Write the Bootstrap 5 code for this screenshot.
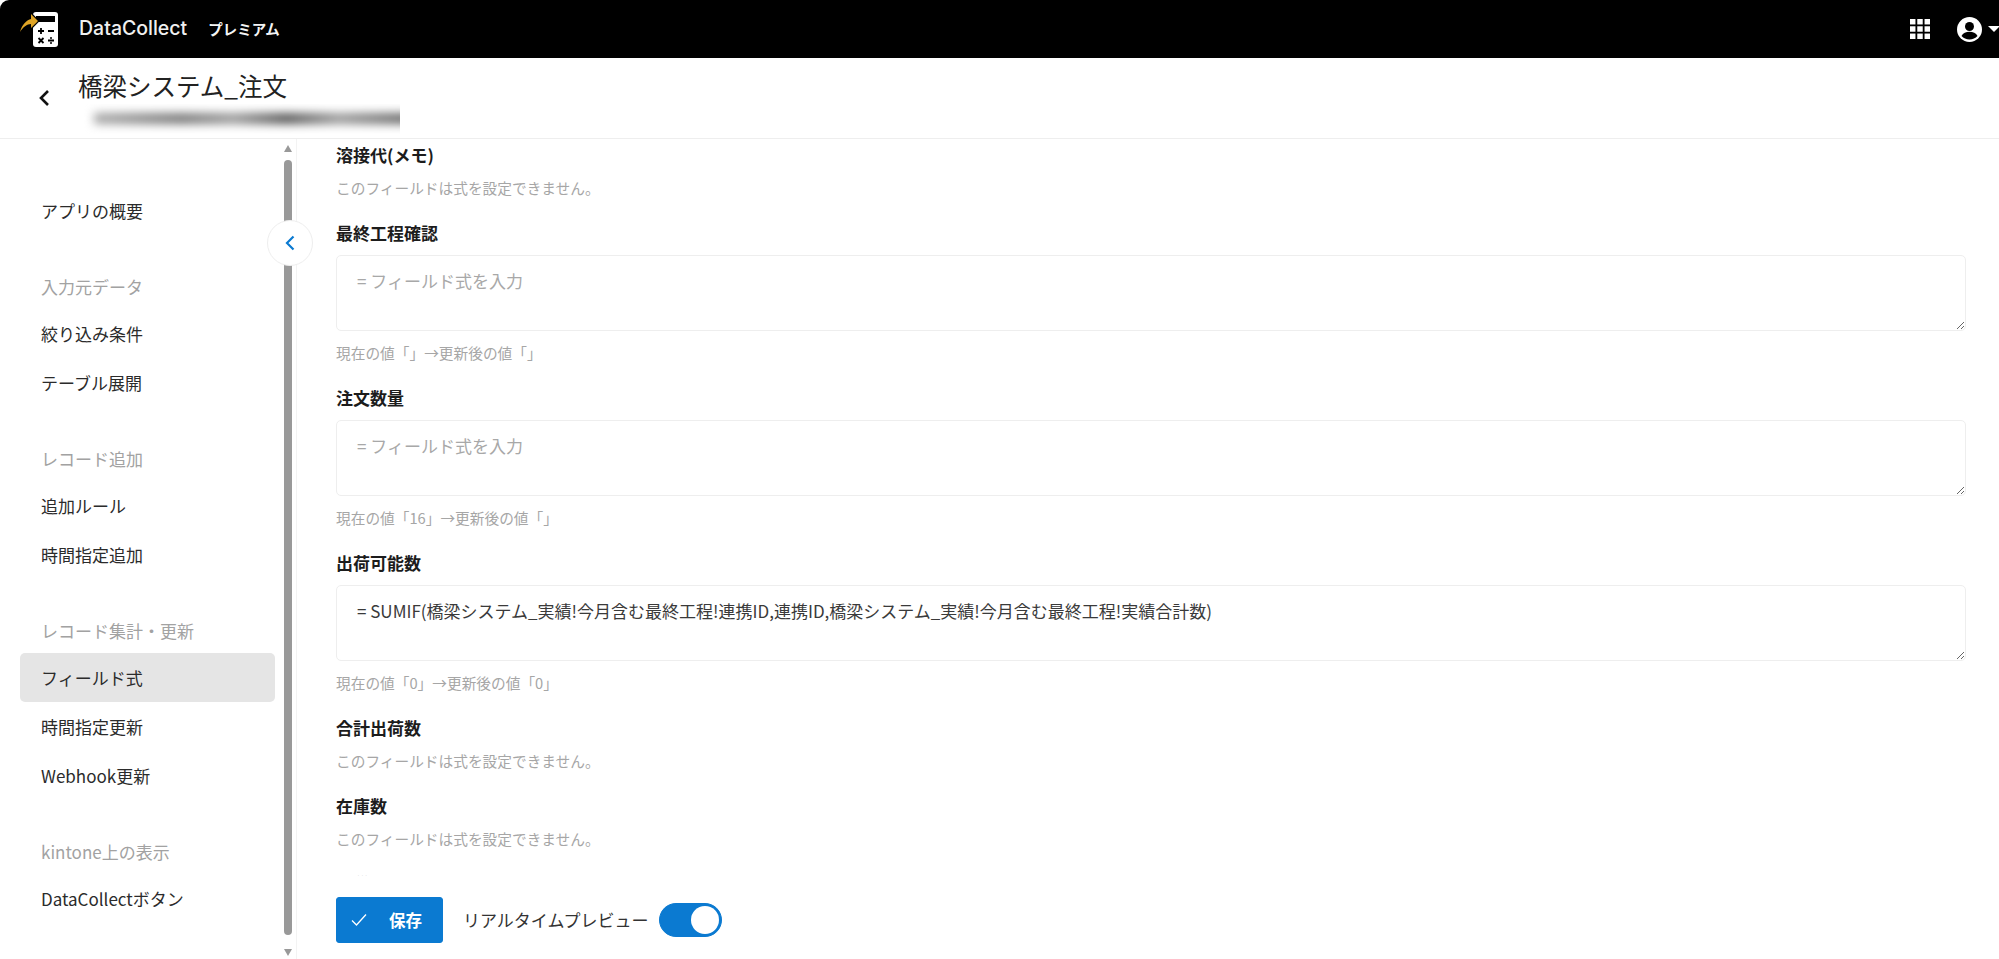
<!DOCTYPE html>
<html lang="ja">
<head>
    <meta charset="UTF-8">
    <meta name="viewport" content="width=device-width, initial-scale=1.0">
    <title>DataCollect</title>
    <link href="https://cdn.jsdelivr.net/npm/bootstrap@5.3.0/dist/css/bootstrap.min.css" rel="stylesheet">
    <style>
        html, body {
            height: 100%;
        }
        body {
            font-family: "Noto Sans CJK JP", "Noto Sans", sans-serif;
            color: #222;
            background: #fff;
            overflow: hidden;
        }
        .app-shell {
            height: 959px;
        }
        .top-bar {
            height: 58px;
            padding: 0;
            background: #000;
            border-top-left-radius: 9px;
            flex-wrap: nowrap;
        }
        .brand-logo {
            margin-left: 18px;
        }
        .brand-name {
            margin-left: 19px;
            color: #f0f0f0;
            font-family: Inter, sans-serif;
            font-size: 19.500px;
            font-weight: 500;
        }
        .brand-plan {
            margin-left: 21px;
            color: #f4f4f4;
            font-size: 14.500px;
            font-weight: 700;
        }
        .top-icons {
            gap: 27px;
            margin-right: -1px;
        }
        .caret-down {
            width: 0;
            height: 0;
            margin-left: 6px;
            border-left: 6px solid transparent;
            border-right: 6px solid transparent;
            border-top: 6px solid #fff;
        }
        .title-bar {
            height: 81px;
            border-bottom: 1px solid #eee;
        }
        .back-link {
            width: 78px;
            padding-left: 37px;
            margin-top: 25px;
        }
        .title-text {
            padding-top: 13px;
        }
        .app-title {
            font-size: 24.500px;
            font-weight: 400;
            line-height: 30px;
            margin: 0;
            color: #222;
        }
        .blur-clip {
            width: 322px;
            height: 30px;
            overflow: hidden;
            margin-top: 3px;
        }
        .blur-bar {
            width: 350px;
            height: 11px;
            margin: 9px 0 0 16px;
            background: linear-gradient(90deg, #aaa, #777 25%, #999 40%, #555 55%, #999 70%, #666 90%, #888);
            filter: blur(5px);
        }
        .side-menu {
            width: 297px;
            flex: none;
            padding: 47px 21px 0 20px;
            border-right: 1px solid #f3f3f3;
        }
        .menu-head {
            height: 45px;
            margin-top: 29px;
            padding-left: 21px;
            line-height: 45px;
            font-size: 17px;
            color: #a2a2a2;
        }
        .menu-item.nav-link {
            height: 49px;
            padding: 0 0 0 21px;
            line-height: 49px;
            font-size: 17px;
            color: #2b2b2b;
            border-radius: 5px;
        }
        .menu-item.current {
            background: #e5e5e5;
        }
        .fake-scroll {
            position: absolute;
            left: 284px;
            top: 142px;
            width: 8px;
            height: 817px;
        }
        .fake-thumb {
            position: absolute;
            left: 0;
            top: 18px;
            width: 8px;
            height: 775px;
            border-radius: 4px;
            background: #999;
        }
        .arrow-up, .arrow-down {
            position: absolute;
            left: 0;
            width: 0;
            height: 0;
            border-left: 4px solid transparent;
            border-right: 4px solid transparent;
        }
        .arrow-up {
            top: 3px;
            border-bottom: 7px solid #999;
        }
        .arrow-down {
            bottom: 3px;
            border-top: 7px solid #999;
        }
        .collapse-btn {
            position: absolute;
            left: 267px;
            top: 220px;
            width: 46px;
            height: 46px;
            padding: 0;
            border: 1px solid #eee;
            border-radius: 50%;
            background: #fff;
        }
        .form-scroll {
            padding: 4px 33px 0 39px;
        }
        .field-block {
            margin-bottom: 23px;
        }
        .field-name {
            display: block;
            margin-bottom: 10px;
            font-size: 17px;
            font-weight: 700;
            line-height: 24px;
            color: #1c1c1c;
        }
        .field-note {
            margin-top: 0;
            font-size: 14.700px;
            line-height: 21px;
            color: #a6a6a6;
        }
        .field-input.form-control {
            height: 76px;
            padding: 13px 20px;
            margin-bottom: 11px;
            font-size: 17px;
            line-height: 24px;
            color: #3a3a3a;
            border-color: #eee;
            border-radius: 5px;
        }
        .field-input::placeholder {
            color: #a8a8a8;
        }
        .cut-label {
            padding-left: 21px;
            font-size: 5px;
            line-height: 6px;
            color: #ccc;
        }
        .save-bar {
            height: 80px;
            flex: none;
            padding: 0 0 16px 39px;
        }
        .save-btn.btn {
            width: 107px;
            height: 46px;
            padding: 0 0 0 14px;
            gap: 22px;
            font-size: 16.500px;
            font-weight: 700;
            background: #0b7ad1;
            border-color: #0b7ad1;
            border-radius: 3px;
        }
        .preview-row {
            height: 46px;
        }
        .preview-label {
            margin-left: 20px;
            font-size: 17px;
            color: #333;
        }
        .preview-switch.form-check {
            margin: 0 0 0 11px;
            padding: 0;
            min-height: 0;
        }
        .preview-switch .form-check-input {
            width: 63px;
            height: 34px;
            margin: 0;
            float: none;
            display: block;
            background-color: #0b7ad1;
            border-color: #0b7ad1;
            background-image: url("data:image/svg+xml,%3csvg xmlns='http://www.w3.org/2000/svg' viewBox='-4 -4 8 8'%3e%3ccircle r='3.5' fill='%23fff'/%3e%3c/svg%3e");
        }
    </style>
</head>
<body>
    <div class="app-shell d-flex flex-column position-relative">
        <nav class="navbar top-bar justify-content-between">
            <div class="d-flex align-items-center">
                <svg class="brand-logo" width="42" height="40" viewBox="0 0 42 40">
                    <rect x="15" y="3" width="25" height="35" rx="3" fill="#fff"/>
                    <rect x="18" y="7" width="19" height="6" fill="#000"/>
                    <path d="M2 23C4 15 9 11 13 10V5l7 7-7 7v-4C9 15 5 18 2 23z" fill="#e0a526" stroke="#000" stroke-width="2.400" paint-order="stroke"/>
                    <path d="M20 22h6M23 19v6M30 22h6M20.500 29l5 5M25.500 29l-5 5M30 31.500h6" stroke="#000" stroke-width="1.800" fill="none"/>
                    <circle cx="33" cy="29" r="1" fill="#000"/>
                    <circle cx="33" cy="34" r="1" fill="#000"/>
                </svg>
                <span class="brand-name">DataCollect</span>
                <span class="brand-plan">プレミアム</span>
            </div>
            <div class="top-icons d-flex align-items-center">
                <svg width="20" height="20" viewBox="0 0 22 22" fill="#fff">
                    <rect x="0" y="0" width="6" height="6"/><rect x="8" y="0" width="6" height="6"/><rect x="16" y="0" width="6" height="6"/>
                    <rect x="0" y="8" width="6" height="6"/><rect x="8" y="8" width="6" height="6"/><rect x="16" y="8" width="6" height="6"/>
                    <rect x="0" y="16" width="6" height="6"/><rect x="8" y="16" width="6" height="6"/><rect x="16" y="16" width="6" height="6"/>
                </svg>
                <div class="d-flex align-items-center">
                    <svg width="25" height="25" viewBox="0 0 25 25">
                        <circle cx="12.500" cy="12.500" r="12.500" fill="#fff"/>
                        <circle cx="12.500" cy="9.500" r="4.500" fill="#000"/>
                        <path d="M4.500 19c1.500-3 4.500-4.200 8-4.200s6.500 1.200 8 4.200c-2 2.200-4.800 3.500-8 3.500s-6-1.300-8-3.500z" fill="#000"/>
                    </svg>
                    <span class="caret-down"></span>
                </div>
            </div>
        </nav>

        <header class="title-bar d-flex align-items-start">
            <a class="back-link d-block" href="#">
                <svg width="14" height="18" viewBox="0 0 14 18"><path d="M11 2 4 9l7 7" fill="none" stroke="#111" stroke-width="2.600"/></svg>
            </a>
            <div class="title-text">
                <h1 class="app-title">橋梁システム_注文</h1>
                <div class="blur-clip"><div class="blur-bar"></div></div>
            </div>
        </header>

        <div class="d-flex flex-grow-1 overflow-hidden">
            <aside class="side-menu">
                <nav class="nav flex-column">
                    <a class="nav-link menu-item" href="#">アプリの概要</a>
                    <div class="menu-head">入力元データ</div>
                    <a class="nav-link menu-item" href="#">絞り込み条件</a>
                    <a class="nav-link menu-item" href="#">テーブル展開</a>
                    <div class="menu-head">レコード追加</div>
                    <a class="nav-link menu-item" href="#">追加ルール</a>
                    <a class="nav-link menu-item" href="#">時間指定追加</a>
                    <div class="menu-head">レコード集計・更新</div>
                    <a class="nav-link menu-item current" href="#">フィールド式</a>
                    <a class="nav-link menu-item" href="#">時間指定更新</a>
                    <a class="nav-link menu-item" href="#">Webhook更新</a>
                    <div class="menu-head">kintone上の表示</div>
                    <a class="nav-link menu-item" href="#">DataCollectボタン</a>
                </nav>
            </aside>

            <main class="d-flex flex-column flex-grow-1 overflow-hidden">
                <div class="form-scroll flex-grow-1 overflow-hidden">
                    <div class="field-block">
                        <label class="field-name">溶接代(メモ)</label>
                        <div class="field-note">このフィールドは式を設定できません。</div>
                    </div>
                    <div class="field-block">
                        <label class="field-name">最終工程確認</label>
                        <textarea class="form-control field-input" placeholder="= フィールド式を入力"></textarea>
                        <div class="field-note">現在の値「」→更新後の値「」</div>
                    </div>
                    <div class="field-block">
                        <label class="field-name">注文数量</label>
                        <textarea class="form-control field-input" placeholder="= フィールド式を入力"></textarea>
                        <div class="field-note">現在の値「16」→更新後の値「」</div>
                    </div>
                    <div class="field-block">
                        <label class="field-name">出荷可能数</label>
                        <textarea class="form-control field-input">= SUMIF(橋梁システム_実績!今月含む最終工程!連携ID,連携ID,橋梁システム_実績!今月含む最終工程!実績合計数)</textarea>
                        <div class="field-note">現在の値「0」→更新後の値「0」</div>
                    </div>
                    <div class="field-block">
                        <label class="field-name">合計出荷数</label>
                        <div class="field-note">このフィールドは式を設定できません。</div>
                    </div>
                    <div class="field-block">
                        <label class="field-name">在庫数</label>
                        <div class="field-note">このフィールドは式を設定できません。</div>
                    </div>
                    <div class="cut-label">· · ·</div>
                </div>
                <div class="save-bar d-flex align-items-end">
                    <button class="btn btn-primary save-btn d-flex align-items-center" type="button">
                        <svg width="16" height="14" viewBox="0 0 16 14"><path d="M1 7.500 5.500 12 15 1.500" fill="none" stroke="#fff" stroke-width="1.300"/></svg>
                        <span>保存</span>
                    </button>
                    <div class="d-flex align-items-center preview-row">
                        <span class="preview-label">リアルタイムプレビュー</span>
                        <div class="form-check form-switch preview-switch">
                            <input class="form-check-input" type="checkbox" role="switch" checked>
                        </div>
                    </div>
                </div>
            </main>
        </div>

        <div class="fake-scroll">
            <span class="arrow-up"></span>
            <span class="fake-thumb"></span>
            <span class="arrow-down"></span>
        </div>
        <button class="collapse-btn d-flex align-items-center justify-content-center" type="button">
            <svg width="12" height="16" viewBox="0 0 12 16"><path d="M9.500 1.500 3 8l6.500 6.500" fill="none" stroke="#0b7ad1" stroke-width="2.200"/></svg>
        </button>
    </div>
    <script src="https://cdn.jsdelivr.net/npm/bootstrap@5.3.0/dist/js/bootstrap.bundle.min.js"></script>
</body>
</html>
